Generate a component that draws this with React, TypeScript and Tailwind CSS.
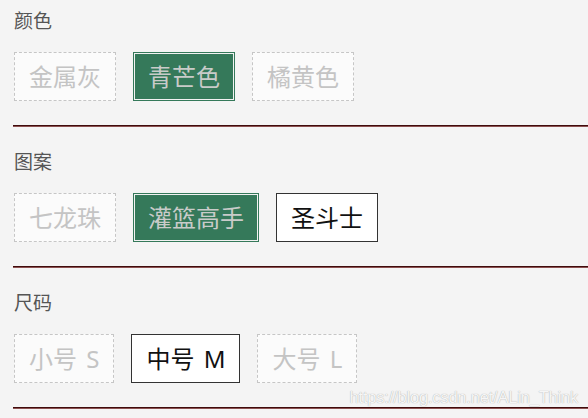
import React from "react";

type OptState = "disabled" | "selected" | "normal";

type Group = {
  title: string;
  options: { label: string; state: OptState }[];
};

const groups: Group[] = [
  {
    title: "颜色",
    options: [
      { label: "金属灰", state: "disabled" },
      { label: "青芒色", state: "selected" },
      { label: "橘黄色", state: "disabled" },
    ],
  },
  {
    title: "图案",
    options: [
      { label: "七龙珠", state: "disabled" },
      { label: "灌篮高手", state: "selected" },
      { label: "圣斗士", state: "normal" },
    ],
  },
  {
    title: "尺码",
    options: [
      { label: "小号 S", state: "disabled" },
      { label: "中号 M", state: "normal" },
      { label: "大号 L", state: "disabled" },
    ],
  },
];

const stateClass: Record<OptState, string> = {
  disabled: "border border-dashed border-[#c6c6c6] bg-[#fbfbfb] text-[#c4c4c4]",
  selected:
    "border border-[#35795a] bg-[#35795a] text-[#c9cbc9] shadow-[inset_0_0_0_1px_#f2f2f2]",
  normal: "border border-[#333333] bg-white text-[#111111]",
};

function Option({ label, state }: { label: string; state: OptState }) {
  return (
    <div
      className={`flex h-[49px] items-center justify-center px-[14px] text-[24px] leading-none [word-spacing:3px] ${stateClass[state]}`}
    >
      {label}
    </div>
  );
}

export default function App() {
  return (
    <div
      className="relative min-h-[418px] w-full overflow-hidden bg-[#f4f4f4]"
      style={{ fontFamily: '"Noto Sans", "Noto Sans CJK SC", sans-serif' }}
    >
      {groups.map((g) => (
        <section key={g.title} className="flex flex-col pl-[13px] pt-[9px] pb-[14px]">
          <h3 className="h-[24px] pl-px text-[19px] leading-[24px] text-[#555555]">{g.title}</h3>
          <div className="mt-[19px] flex gap-[17px] pl-px">
            {g.options.map((o) => (
              <Option key={o.label} label={o.label} state={o.state} />
            ))}
          </div>
          <div className="mt-[24px] h-[2px] border-t border-t-[#3f0c0c] border-b border-b-[#8c5050]" />
        </section>
      ))}
      <span
        className="pointer-events-none absolute right-[10px] top-[385px] text-[16.5px] tracking-[-0.2px] text-[#f6f6f6] [text-shadow:0_0_1px_#9a9a9a]"
        style={{ fontFamily: '"Liberation Sans", Arial, sans-serif' }}
      >
        https://blog.csdn.net/ALin_Think
      </span>
    </div>
  );
}
